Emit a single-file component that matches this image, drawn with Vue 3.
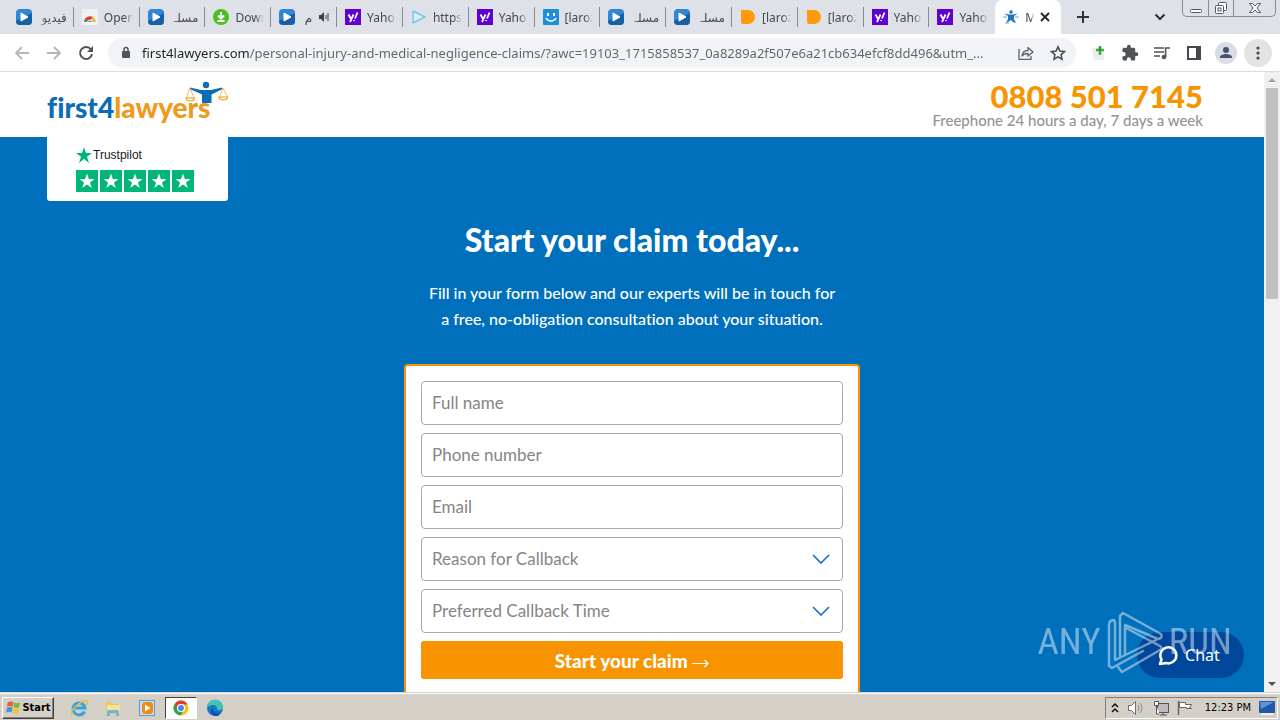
<script setup>
import { reactive } from 'vue';

const tabs = [
    { icon: 'play', title: 'فيديو', rtl: true },
    { icon: 'chrome', title: 'Open' },
    { icon: 'play', title: 'مسلـ', rtl: true },
    { icon: 'down', title: 'Down' },
    { icon: 'play', title: 'م', rtl: true, sound: true },
    { icon: 'yahoo', title: 'Yaho' },
    { icon: 'outline', title: 'https' },
    { icon: 'yahoo', title: 'Yaho' },
    { icon: 'smile', title: '[laroz' },
    { icon: 'play', title: 'مسلـ', rtl: true },
    { icon: 'play', title: 'مسلـ', rtl: true },
    { icon: 'orange', title: '[laroz' },
    { icon: 'orange', title: '[laroz' },
    { icon: 'yahoo', title: 'Yaho' },
    { icon: 'yahoo', title: 'Yaho' },
];

const fields = [
    { name: 'fullName', type: 'text', label: 'Full name' },
    { name: 'phone', type: 'tel', label: 'Phone number' },
    { name: 'email', type: 'email', label: 'Email' },
];

const selects = [
    { name: 'reason', label: 'Reason for Callback' },
    { name: 'time', label: 'Preferred Callback Time' },
];

const state = reactive({
    url: 'first4lawyers.com/personal-injury-and-medical-negligence-claims/?awc=19103_1715858537_0a8289a2f507e6a21cb634efcf8dd496&utm_...',
    fullName: '',
    phone: '',
    email: '',
    reason: '',
    time: '',
});
</script>

<template>
    <div class="desktop">
        <div class="tabstrip">
            <div class="tabs">
                <button v-for="(tab, i) in tabs" :key="i" class="tab" type="button">
                    <svg class="favicon" viewBox="0 0 16 16" aria-hidden="true">
                        <g v-if="tab.icon === 'play'">
                            <rect width="16" height="16" rx="4" fill="#2f86d2" />
                            <path d="M16 4v8a4 4 0 0 1-4 4H4a4 4 0 0 1-4-4z" fill="#1860a6" />
                            <path d="M5 4v8l7-4z" fill="#fff" stroke="#fff" stroke-linejoin="round" />
                        </g>
                        <g v-else-if="tab.icon === 'chrome'">
                            <rect width="16" height="16" rx="1" fill="#f1f1f3" />
                            <path d="M2 13a6 6 0 0 1 9-5l-3 4z" fill="#e33b2e" />
                            <path d="M11 8a6 6 0 0 1 3 5h-5z" fill="#f5bd18" />
                            <path d="M2 13a6 6 0 0 1 1-3l4 3z" fill="#34a853" />
                            <path d="M5.500 13.500a2.500 2.500 0 0 1 5 0z" fill="#4285f4" stroke="#fff" />
                        </g>
                        <g v-else-if="tab.icon === 'down'">
                            <circle cx="8" cy="8" r="8" fill="#4bbf1f" />
                            <path d="M8 3v6M5 6.500l3 3 3-3M4.500 12h7" fill="none" stroke="#fff" stroke-width="2" />
                        </g>
                        <g v-else-if="tab.icon === 'yahoo'">
                            <rect width="16" height="16" fill="#5f01d1" />
                            <path d="M3.500 5.500l2.500 4.500M8.500 5.500L5 13M12.500 3.500L10 9.500M9.300 11l-.4 1" fill="none" stroke="#fff" stroke-width="1.800" />
                        </g>
                        <path v-else-if="tab.icon === 'outline'" d="M2 2v12l12-6z" fill="#dcecf4" stroke="#71cbe4" stroke-width="1.500" stroke-linejoin="round" />
                        <g v-else-if="tab.icon === 'smile'">
                            <rect width="16" height="16" rx="1" fill="#1b8fdc" />
                            <path d="M4 4h2v3H4zM10 4h2v3h-2z" fill="#fff" />
                            <path d="M3 9c2 4 8 4 10 0" fill="none" stroke="#fff" stroke-width="1.500" />
                        </g>
                        <path v-else d="M1 1h7a7 7 0 0 1 0 14H3a2 2 0 0 1-2-2z" fill="#ff9a0c" />
                    </svg>
                    <span class="tab-title" :class="{ rtl: tab.rtl }">{{ tab.title }}</span>
                    <svg v-if="tab.sound" class="sound" viewBox="0 0 12 12" aria-hidden="true">
                        <path d="M1 4h2l3-3v10L3 8H1z" fill="#3c4043" />
                        <path d="M8 4v4M10 2v8" stroke="#3c4043" />
                    </svg>
                </button>
                <button class="tab active" type="button">
                    <svg class="favicon" viewBox="0 0 16 16" aria-hidden="true">
                        <circle cx="8" cy="3" r="1.800" fill="#1d75bb" />
                        <path d="M1 4.500l5 1h4l5-1-4 2.500v3l2 4-3-1-2-2-3 2-2 1 2-4V7z" fill="#1d75bb" />
                        <path d="M0 8h4M12 8h4M2 14h4" stroke="#6aa9cf" />
                    </svg>
                    <span class="tab-title">M</span>
                    <svg class="close" viewBox="0 0 10 10" aria-hidden="true"><path d="M1 1l8 8M9 1L1 9" stroke="#202124" stroke-width="1.800" /></svg>
                </button>
            </div>
            <button class="strip-btn" type="button" aria-label="New tab">
                <svg width="14" height="14" viewBox="0 0 14 14"><path d="M7 1v12M1 7h12" stroke="#303236" stroke-width="2" /></svg>
            </button>
            <button class="strip-btn search-tabs" type="button" aria-label="Search tabs">
                <svg width="12" height="8" viewBox="0 0 12 8"><path d="M1.500 1.500L6 6l4.500-4.500" fill="none" stroke="#303236" stroke-width="2" /></svg>
            </button>
            <div class="window-buttons">
                <button type="button" aria-label="Minimize">
                    <svg width="14" height="14" viewBox="0 0 14 14"><rect x="1.500" y="8.500" width="11" height="3" rx="1" fill="#fff" stroke="#55585e" /></svg>
                </button>
                <button type="button" aria-label="Restore">
                    <svg width="14" height="14" viewBox="0 0 14 14" fill="#fff" stroke="#55585e"><rect x="4.500" y="1.500" width="8" height="8" rx="1" /><rect x="1.500" y="4.500" width="8" height="8" rx="1" /><rect x="4" y="7" width="3" height="3" /></svg>
                </button>
                <button class="wide" type="button" aria-label="Close">
                    <svg width="14" height="14" viewBox="0 0 14 14"><path d="M1.500 2.500h3L7 5l2.500-2.500h3L9 7l3.500 4.500h-3L7 9l-2.500 2.500h-3L5 7z" fill="#fff" stroke="#55585e" /></svg>
                </button>
            </div>
        </div>

        <div class="toolbar">
            <button class="tool" type="button" aria-label="Back">
                <svg width="16" height="16" viewBox="0 0 16 16"><path d="M15 8H2M8 2L2 8l6 6" fill="none" stroke="#b4b6b9" stroke-width="1.800" /></svg>
            </button>
            <button class="tool" type="button" aria-label="Forward">
                <svg width="16" height="16" viewBox="0 0 16 16"><path d="M1 8h13M8 2l6 6-6 6" fill="none" stroke="#b4b6b9" stroke-width="1.800" /></svg>
            </button>
            <button class="tool" type="button" aria-label="Reload">
                <svg width="16" height="16" viewBox="0 0 16 16"><path d="M13 4.500A6 6 0 1 0 14 9" fill="none" stroke="#505357" stroke-width="2" /><path d="M15 1v6H9z" fill="#505357" /></svg>
            </button>
            <div class="omnibox">
                <svg class="lock" viewBox="0 0 10 14" aria-hidden="true"><rect x="1" y="5" width="8" height="7" rx="1" fill="#505357" /><path d="M3 5.500V3.500a2 2 0 0 1 4 0v2" fill="none" stroke="#505357" stroke-width="1.500" /></svg>
                <input v-model="state.url" class="url" type="text" aria-label="Address and search bar" />
                <button class="tool" type="button" aria-label="Share">
                    <svg width="16" height="16" viewBox="0 0 16 16" fill="none" stroke="#5f6368" stroke-width="1.300"><path d="M1 4v10.300h12V11" /><path d="M4 11c.5-4 3-5.500 6-5.500V2.500L15 7l-5 4V8.500c-3 0-5 1-6 2.500z" stroke-linejoin="round" /></svg>
                </button>
                <button class="tool" type="button" aria-label="Bookmark">
                    <svg width="16" height="16" viewBox="0 0 16 16"><path d="M8 1.800l1.900 4.200 4.600.5-3.400 3.100.9 4.600L8 11.900l-4 2.300.9-4.600L1.500 6.500l4.600-.5z" fill="none" stroke="#45484c" stroke-width="1.500" /></svg>
                </button>
            </div>
            <div class="extensions">
                <button class="tool" type="button" aria-label="Extension">
                    <svg width="16" height="16" viewBox="0 0 16 16"><path d="M2 3h9l3 3v9H4z" fill="#ededf0" /><path d="M10 1v9M6 5h8" stroke="#3fae3a" stroke-width="2.500" /><path d="M10 2v4" stroke="#267b2a" /></svg>
                </button>
                <button class="tool" type="button" aria-label="Extensions">
                    <svg width="18" height="18" viewBox="0 0 24 24"><path d="M20.500 11H19V7a2 2 0 0 0-2-2h-4V3.500a2.500 2.500 0 0 0-5 0V5H4a2 2 0 0 0-2 2v3.800h1.500a2.700 2.700 0 0 1 0 5.400H2V20a2 2 0 0 0 2 2h3.800v-1.500a2.700 2.700 0 0 1 5.400 0V22H17a2 2 0 0 0 2-2v-4h1.500a2.500 2.500 0 0 0 0-5z" fill="#505357" /></svg>
                </button>
                <button class="tool" type="button" aria-label="Media control">
                    <svg width="18" height="16" viewBox="0 0 18 16"><path d="M1 3h10M1 7h10M1 11h6" stroke="#505357" stroke-width="1.600" /><circle cx="11" cy="12" r="2.300" fill="#505357" /><path d="M12.600 12V3H17" fill="none" stroke="#505357" stroke-width="1.600" /></svg>
                </button>
                <button class="tool" type="button" aria-label="Side panel">
                    <svg width="16" height="16" viewBox="0 0 16 16"><rect x="2" y="2" width="12" height="12" fill="#fff" stroke="#45484c" stroke-width="2" /><path d="M10 2h4v12h-4z" fill="#45484c" /></svg>
                </button>
                <button class="tool" type="button" aria-label="Profile">
                    <svg width="22" height="22" viewBox="0 0 22 22"><circle cx="11" cy="11" r="11" fill="#d9dde5" /><circle cx="11" cy="8" r="3" fill="#455272" /><path d="M5 16v-1c0-2 4-3 6-3s6 1 6 3v1z" fill="#455272" /></svg>
                </button>
                <button class="tool menu" type="button" aria-label="Menu">
                    <svg width="4" height="16" viewBox="0 0 4 16" fill="#45484c"><circle cx="2" cy="3" r="1.600" /><circle cx="2" cy="8" r="1.600" /><circle cx="2" cy="13" r="1.600" /></svg>
                </button>
            </div>
        </div>

        <div class="viewport">
            <div class="page">
                <header class="site-header">
                    <div class="container header-row">
                        <a class="logo" href="#" aria-label="first4lawyers">
                            <span class="logo-text"><span class="logo-blue">first4</span>lawyers</span>
                            <svg class="logo-man" viewBox="0 0 46 24" aria-hidden="true">
                                <circle cx="23" cy="4" r="3.200" fill="#0e6cb6" />
                                <path d="M7 6.500l11 2.500h10L39 6.500l.5 1.500L28.500 13.500V22H19v-8.500L7 8z" fill="#0e6cb6" />
                                <path d="M7 7L3.500 17M7 7l4 10M40 7l-3.500 9M40 7l4.500 9" stroke="#ee9a1c" stroke-width=".7" />
                                <path d="M3 17h8.500c-.5 4-8 4-8.500 0zM36 16h8.500c-.5 4-8 4-8.500 0z" fill="#fff" stroke="#ee9a1c" stroke-width="1.200" />
                            </svg>
                        </a>
                        <div class="contact">
                            <a class="phone" href="tel:08085017145">0808 501 7145</a>
                            <span class="hours">Freephone 24 hours a day, 7 days a week</span>
                        </div>
                    </div>
                </header>
                <main class="hero">
                    <div class="container">
                        <a class="trustpilot" href="#">
                            <span class="tp-name">
                                <svg width="16" height="16" viewBox="0 0 16 16" aria-hidden="true"><path d="M8 0l2 6h6l-5 3.700L13 16l-5-3.900L3 16l2-6.300L0 6h6z" fill="#00b67a" /></svg>
                                Trustpilot
                            </span>
                            <span class="tp-stars">
                                <svg v-for="n in 5" :key="n" width="22" height="22" viewBox="0 0 22 22" aria-hidden="true">
                                    <rect width="22" height="22" fill="#00b67a" />
                                    <path d="M11 3.500l1.900 5.500h5.600L14 12.400l1.700 5.600-4.700-3.400L6.300 18 8 12.400 3.500 9h5.600z" fill="#fff" />
                                </svg>
                            </span>
                        </a>
                    </div>
                    <h1 class="title">Start your claim today...</h1>
                    <p class="intro">Fill in your form below and our experts will be in touch for<br />a free, no-obligation consultation about your situation.</p>
                    <form class="claim" @submit.prevent>
                        <input v-for="f in fields" :key="f.name" v-model="state[f.name]" class="field" :type="f.type" :placeholder="f.label" :aria-label="f.label" />
                        <div v-for="s in selects" :key="s.name" class="select-wrap">
                            <select v-model="state[s.name]" class="field" :aria-label="s.label">
                                <option value="">{{ s.label }}</option>
                            </select>
                            <svg class="chevron" viewBox="0 0 18 10" aria-hidden="true"><path d="M1 1l8 8 8-8" fill="none" stroke="#1b74bd" stroke-width="1.700" /></svg>
                        </div>
                        <button class="submit" type="submit">Start your claim
                            <svg width="17" height="9" viewBox="0 0 17 9" aria-hidden="true"><path d="M0 4.500h16M12.500 1l3.500 3.500L12.500 8" fill="none" stroke="#fff" stroke-width="1.200" /></svg>
                        </button>
                    </form>
                </main>
            </div>
            <div class="scrollbar" aria-hidden="true">
                <svg width="16" height="16" viewBox="0 0 16 16"><path d="M4 10l4-4 4 4z" fill="#a3a3a3" /></svg>
                <div class="thumb"></div>
                <svg width="16" height="16" viewBox="0 0 16 16"><path d="M4 6l4 4 4-4z" fill="#505050" /></svg>
            </div>
            <button class="chat" type="button">
                <svg width="22" height="22" viewBox="0 0 22 22" aria-hidden="true"><path d="M3 20l1.500-4.500A8 8 0 1 1 9 19z" fill="none" stroke="#fff" stroke-width="2.500" stroke-linejoin="round" /></svg>
                Chat
            </button>
            <div class="watermark">
                <span>ANY</span>
                <svg width="58" height="64" viewBox="0 0 58 64" fill="none" stroke="#fff" stroke-width="2.500" stroke-linejoin="round" stroke-linecap="round" aria-hidden="true">
                    <path d="M9 49V13L8 10Q3 10 3 15V56l3 2 31-17" />
                    <path d="M9 50L50 30" />
                    <path d="M14 46V6l3-3 38 21q2 4-3 5L19 15v30" />
                    <path d="M12 57l4 5 38-22q3-2 0-4L20 18" />
                </svg>
                <span>RUN</span>
            </div>
        </div>

        <footer class="taskbar">
            <button class="start" type="button">
                <svg width="17" height="16" viewBox="0 0 18 16" aria-hidden="true">
                    <path d="M3 2q3-2 6 0L8 7q-3-2-6 0z" fill="#e8602c" /><path d="M10 2q3 2 6 0l-1 5q-3 2-6 0z" fill="#7cb83a" />
                    <path d="M2 8q3-2 6 0l-1 5q-3-2-6 0z" fill="#4a8ed6" /><path d="M9 8q3 2 6 0l-1 5q-3 2-6 0z" fill="#f7c02c" />
                </svg>
                Start
            </button>
            <div class="launchers">
                <button class="launcher" type="button" aria-label="Internet Explorer">
                    <svg width="18" height="18" viewBox="0 0 18 18"><path d="M14.500 12.500A6 6 0 1 1 15 9H5" fill="none" stroke="#36a3df" stroke-width="3" /><path d="M2 16C-1 12 12 0 17 2c1 1 0 3-1 4" fill="none" stroke="#edbb3c" stroke-width="1.500" /></svg>
                </button>
                <button class="launcher" type="button" aria-label="File Explorer">
                    <svg width="18" height="18" viewBox="0 0 18 18"><path d="M2 3h5l1 2h7v10H2z" fill="#e9c75f" /><path d="M3 6h13v8H3z" fill="#f6e39b" /><path d="M3 17v-4q0-2 2-2h8q2 0 2 2v4h-3v-3H6v3z" fill="#72b6df" /></svg>
                </button>
                <button class="launcher" type="button" aria-label="Media Player">
                    <svg width="18" height="18" viewBox="0 0 18 18"><rect x="1.500" y="1.500" width="15" height="15" fill="#c8e1f2" stroke="#5a9dcc" /><rect x="4" y="3" width="11" height="12" rx="3" fill="#f28a18" /><path d="M7 5.500v7L12.500 9z" fill="#fff" /></svg>
                </button>
                <button class="launcher pressed" type="button" aria-label="Chrome">
                    <svg width="16" height="16" viewBox="0 0 16 16"><circle cx="8" cy="8" r="7.500" fill="#fbc116" /><path d="M1.500 4.200A7.500 7.500 0 0 1 14.500 4.500H8L4.900 9.800z" fill="#e33b2e" /><path d="M1.500 4.200A7.500 7.500 0 0 0 7.600 15.500L11 9.800 8 12 4.900 9.800z" fill="#2fa24c" /><circle cx="8" cy="8" r="3.500" fill="#4285f4" stroke="#fff" stroke-width="1.200" /></svg>
                </button>
                <button class="launcher" type="button" aria-label="Edge">
                    <svg width="18" height="18" viewBox="0 0 18 18"><circle cx="9" cy="9" r="8" fill="#1676c8" /><path d="M1 9a8 8 0 0 1 16-1c0 4-6 4-6 2 1-4-6-6-10-1z" fill="#43c3b1" /><path d="M7 9c-1 4 3 7 8 4l-3 4c-6 1-9-5-5-8z" fill="#0c50a0" /></svg>
                </button>
            </div>
            <div class="tray">
                <svg width="8" height="12" viewBox="0 0 8 12" aria-hidden="true"><path d="M1 5l3-3 3 3M1 10l3-3 3 3" fill="none" stroke="#111" stroke-width="1.500" /></svg>
                <svg width="18" height="16" viewBox="0 0 18 16" aria-hidden="true"><path d="M1.500 5.500h3l4-4v13l-4-4h-3z" fill="#fff" stroke="#707070" /><path d="M11 5q2 3 0 6M13 3q4 5 0 10" fill="none" stroke="#888" /></svg>
                <svg width="16" height="16" viewBox="0 0 16 16" aria-hidden="true"><rect x="4.500" y="3.500" width="11" height="9" fill="#bbb" stroke="#555" /><path d="M7 15h7M10 12v3" stroke="#555" /><path d="M1.500 1.500h4v4h-4zM3.500 6v8h3" fill="#fff" stroke="#555" /></svg>
                <svg width="16" height="16" viewBox="0 0 16 16" aria-hidden="true"><path d="M1.500 1v14" stroke="#666" stroke-width="1.500" /><path d="M2.500 2.500h6v2h6l-2 3 2 1h-5v-1h-7z" fill="#fff" stroke="#666" /></svg>
                <time class="clock">12:23 PM</time>
                <svg width="16" height="14" viewBox="0 0 16 14" aria-hidden="true"><rect width="16" height="12" rx="1" fill="#2357a8" /><path d="M1 1h14L2 8z" fill="#5b95d8" /><path d="M2 13h12" stroke="#eee" stroke-width="2" /></svg>
            </div>
        </footer>
    </div>
</template>

<style>
body {
    margin: 0;
    background-color: #fff;
}
</style>

<style scoped>
* {
    box-sizing: border-box;
}

.desktop {
    display: flex;
    flex-direction: column;
    height: 100vh;
    overflow: hidden;
    font-family: Lato, sans-serif;
    font-variant-ligatures: none;
}

button {
    margin: 0;
    padding: 0;
    border: 0;
    background: none;
    font-family: inherit;
    cursor: pointer;
}

svg {
    flex: none;
}

a {
    text-decoration: none;
}

/* browser tabs */
.tabstrip {
    display: flex;
    flex: none;
    height: 34px;
    padding: 0 4px 0 8px;
    background-color: #dee1e8;
}

.tabs {
    display: flex;
    flex: 0 1 1053px;
    min-width: 0;
}

.tab {
    display: flex;
    flex: 1 1 0;
    align-items: center;
    gap: 6px;
    min-width: 0;
    padding: 0 7px 0 8px;
    font-family: "Noto Sans", "DejaVu Sans", sans-serif;
    font-size: 12px;
    color: #45484d;
    background: linear-gradient(#888c93, #888c93) right center / 1px 20px no-repeat;
}

.tab:nth-last-child(2) {
    background: none;
}

.favicon {
    width: 16px;
    height: 16px;
}

.tab-title {
    flex: 1;
    min-width: 0;
    overflow: hidden;
    white-space: nowrap;
    text-align: start;
    mask-image: linear-gradient(to right, #000 70%, transparent);
}

.tab-title.rtl {
    direction: rtl;
    mask-image: linear-gradient(to left, #000 70%, transparent);
}

.sound {
    width: 12px;
    height: 12px;
}

.active {
    border-radius: 8px 8px 0 0;
    background: #fff;
}

.close {
    width: 10px;
    height: 10px;
    margin-right: 4px;
}

.strip-btn {
    display: flex;
    align-items: center;
    justify-content: center;
    width: 28px;
    margin-left: 8px;
}

.search-tabs {
    margin-left: auto;
    margin-right: 8px;
}

.window-buttons {
    display: flex;
    height: 17px;
    border: 1px solid #888c93;
    border-top: 0;
    border-radius: 0 0 5px 5px;
}

.window-buttons button {
    display: flex;
    align-items: center;
    justify-content: center;
    width: 25px;
}

.window-buttons button + button {
    border-left: 1px solid #888c93;
}

.window-buttons .wide {
    width: 42px;
}

/* browser toolbar */
.toolbar {
    display: flex;
    flex: none;
    align-items: center;
    gap: 4px;
    height: 38px;
    padding: 0 8px;
    border-bottom: 1px solid #dadce0;
    background-color: #fff;
}

.tool {
    display: flex;
    flex: none;
    align-items: center;
    justify-content: center;
    width: 28px;
    height: 28px;
    border-radius: 50%;
}

.menu {
    background-color: #e3e3e4;
}

.omnibox {
    display: flex;
    flex: 1;
    align-items: center;
    gap: 4px;
    height: 30px;
    margin: 0 4px;
    padding: 0 4px 0 13px;
    border-radius: 15px;
    background-color: #f1f3f6;
}

.lock {
    width: 10px;
    height: 14px;
}

.url {
    flex: 1;
    min-width: 0;
    height: 24px;
    margin-left: 7px;
    padding: 0;
    border: 0;
    outline: 0;
    font-family: "Noto Sans", sans-serif;
    font-size: 13px;
    color: transparent;
    background: linear-gradient(to right, #202124 108px, #5f6368 108px) text;
}

.extensions {
    display: flex;
    gap: 4px;
}

/* web page */
.viewport {
    position: relative;
    display: flex;
    flex: 1;
    min-height: 0;
    overflow: hidden;
}

.page {
    display: flex;
    flex: 1;
    flex-direction: column;
    min-width: 0;
}

.container {
    width: 100%;
    max-width: 1170px;
    margin: 0 auto;
}

.site-header {
    flex: none;
    background-color: #fff;
}

.header-row {
    display: flex;
    align-items: center;
    justify-content: space-between;
    height: 65px;
    padding-right: 14px;
}

.logo {
    display: flex;
    position: relative;
    width: 182px;
    padding-top: 4px;
}

.logo-text {
    font-size: 28px;
    font-weight: 900;
    line-height: 36px;
    color: #ee9a1c;
}

.logo-blue {
    color: #0e6cb6;
}

.logo-man {
    position: absolute;
    top: -4px;
    right: 0;
    width: 46px;
    height: 24px;
}

.contact {
    display: flex;
    flex-direction: column;
    align-items: flex-end;
    padding-bottom: 2px;
}

.phone {
    font-size: 31px;
    font-weight: 900;
    line-height: 32px;
    color: #f79400;
}

.hours {
    font-size: 15px;
    font-weight: 500;
    line-height: 16px;
    color: #949494;
}

.hero {
    flex: 1;
    background-color: #0070bc;
}

.trustpilot {
    display: flex;
    flex-direction: column;
    gap: 5px;
    width: 181px;
    height: 64px;
    padding: 8px 29px;
    border-radius: 0 0 3px 3px;
    background-color: #fff;
}

.tp-name {
    display: flex;
    align-items: center;
    gap: 1px;
    height: 20px;
    font-family: "Liberation Sans", sans-serif;
    font-size: 12px;
    color: #191919;
}

.tp-stars {
    display: flex;
    gap: 2px;
}

.title {
    margin: 19px 0 0;
    font-size: 32px;
    font-weight: 900;
    line-height: 40px;
    text-align: center;
    color: #fff;
}

.intro {
    margin: 20px 0 0;
    font-size: 16px;
    font-weight: 500;
    line-height: 26px;
    text-align: center;
    color: #fff;
}

.claim {
    display: flex;
    flex-direction: column;
    gap: 8px;
    width: 456px;
    max-width: 100%;
    margin: 32px auto 0;
    padding: 15px 15px 40px;
    border: 2px solid #f79400;
    border-radius: 4px;
    background-color: #fff;
}

.field {
    width: 100%;
    height: 44px;
    padding: 0 10px 2px;
    border: 1px solid #a9a9a9;
    border-radius: 4px;
    outline: 0;
    font-family: inherit;
    font-size: 17px;
    color: #858585;
    background-color: #fff;
    appearance: none;
}

.field::placeholder {
    color: #858585;
}

.select-wrap {
    display: grid;
    align-items: center;
}

.select-wrap > * {
    grid-area: 1 / 1;
}

.chevron {
    justify-self: end;
    width: 18px;
    height: 10px;
    margin-right: 13px;
    pointer-events: none;
}

.submit {
    height: 38px;
    border-radius: 3px;
    font-size: 19px;
    font-weight: 900;
    color: #fff;
    background-color: #f79400;
}

.scrollbar {
    display: flex;
    flex: none;
    flex-direction: column;
    align-items: center;
    width: 16px;
    background-color: #f1f1f1;
}

.thumb {
    width: 12px;
    height: 34%;
    margin-bottom: auto;
    background-color: #c1c1c1;
}

.chat {
    position: absolute;
    right: 36px;
    bottom: 14px;
    display: flex;
    align-items: center;
    justify-content: center;
    gap: 6px;
    width: 107px;
    height: 46px;
    padding-right: 4px;
    border-radius: 23px;
    font-family: "Noto Sans", sans-serif;
    font-size: 16px;
    color: #fff;
    background-color: #00479c;
}

.watermark {
    position: absolute;
    right: 48px;
    bottom: 18px;
    display: flex;
    align-items: center;
    gap: 5px;
    font-family: "Roboto Condensed", "Liberation Sans Narrow", Roboto, sans-serif;
    font-size: 37px;
    font-weight: 400;
    line-height: 64px;
    color: #fff;
    opacity: 0.45;
    pointer-events: none;
}

/* taskbar */
.taskbar {
    display: flex;
    flex: none;
    align-items: center;
    height: 28px;
    padding: 2px 2px 0;
    border-top: 1px solid #d4d0c8;
    background-color: #d4d0c8;
    box-shadow: inset 0 1px #fff;
}

.start {
    display: flex;
    align-items: center;
    justify-content: center;
    width: 52px;
    height: 22px;
    border: 1px solid;
    border-color: #fff #404040 #404040 #fff;
    box-shadow: inset -1px -1px #808080;
    font-family: "DejaVu Sans Condensed", "Open Sans", sans-serif;
    font-size: 11px;
    font-weight: 700;
    color: #000;
}

.launchers {
    display: flex;
    gap: 2px;
    margin-left: 9px;
}

.launcher {
    display: flex;
    align-items: center;
    justify-content: center;
    width: 32px;
    height: 22px;
}

.pressed {
    border: 1px solid;
    border-color: #404040 #fff #fff #404040;
    background-color: #fff;
}

.tray {
    display: flex;
    align-items: center;
    gap: 8px;
    height: 22px;
    margin-left: auto;
    padding: 0 2px 0 5px;
    border: 1px solid;
    border-color: #808080 #fff #fff #808080;
}

.clock {
    margin-left: 4px;
    font-family: "DejaVu Sans Condensed", "Noto Sans", sans-serif;
    font-size: 11px;
    color: #000;
}
</style>
